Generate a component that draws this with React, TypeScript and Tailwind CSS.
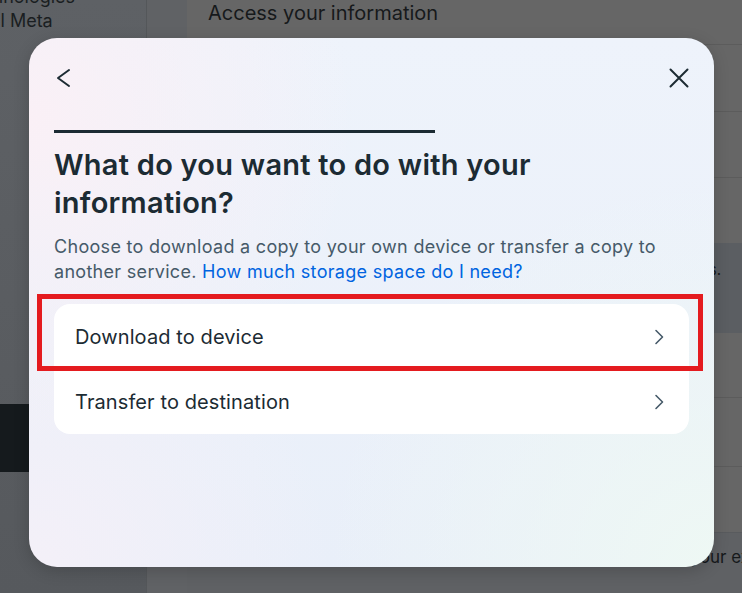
const options = ["Download to device", "Transfer to destination"];

function BackIcon() {
  return (
    <svg width="24" height="24" viewBox="0 0 24 24" fill="none" stroke="#1c2b33" strokeWidth="2" strokeLinecap="round" strokeLinejoin="round">
      <path d="M17 4 6 12l11 8" />
    </svg>
  );
}

function CloseIcon() {
  return (
    <svg width="24" height="24" viewBox="0 0 24 24" fill="none" stroke="#1c2b33" strokeWidth="2" strokeLinecap="round">
      <path d="M3.5 3.5 20.5 20.5M20.5 3.5 3.5 20.5" />
    </svg>
  );
}

function RowChevron() {
  return (
    <svg width="16" height="16" viewBox="0 0 16 16" fill="none" stroke="#465a69" strokeWidth="1.6" strokeLinecap="round" strokeLinejoin="round">
      <path d="M5 1.5 11.5 8 5 14.5" />
    </svg>
  );
}

export default function App() {
  return (
    <div className="relative h-[593px] w-[742px] overflow-hidden font-['Inter',sans-serif]">
      {/* page behind the dialog, already dimmed */}
      <div className="flex h-full">
        <aside className="flex w-[147px] shrink-0 flex-col overflow-hidden border-r border-[#54575a] bg-[linear-gradient(180deg,#5e6165,#56595d)] text-[18px] leading-[24px] text-[#1a1e21]">
          <div className="-mt-[15px]">
            <p className="-ml-[34px] whitespace-nowrap">technologies</p>
            <p className="-ml-[14px] whitespace-nowrap">all Meta</p>
          </div>
          <div className="mt-[371px] h-[68px] w-[128px] shrink-0 rounded-r-lg bg-[#151a1d]" />
        </aside>
        <div className="w-[40px] shrink-0 bg-[#606265]" />
        <main className="flex min-w-0 flex-1 flex-col overflow-hidden bg-[#666666] text-[#16191b]">
          <h1 className="pl-[21px] pt-[1px] text-[20px] leading-[24px]">Access your information</h1>
          <div className="mt-[19px] flex flex-col">
            <div className="h-[67px] border-t border-[#5c5c5c]" />
            <div className="h-[66px] border-t border-[#5c5c5c]" />
            <div className="h-[66px] border-t border-[#5c5c5c]" />
            <div className="flex h-[90px] items-start justify-end bg-[#5b5e62] pt-[16px] pr-[21px] text-[15px] leading-[22px]">
              <p className="whitespace-nowrap">photos and videos.</p>
            </div>
            <div className="h-[65px] border-b border-[#5c5c5c]" />
            <div className="h-[69px] border-b border-[#5c5c5c]" />
            <div className="h-[65px]" />
          </div>
          <div className="flex-1 border-t border-[#595b5e] bg-[#5f6164] pt-[12px] pl-[434px] text-[17px] whitespace-nowrap">
            Manage your experience
          </div>
        </main>
      </div>

      {/* dialog */}
      <div className="absolute left-[29px] top-[38px] flex h-[529px] w-[685px] flex-col rounded-[28px] bg-[radial-gradient(circle_at_0%_15%,#faf0f6_0%,transparent_40%),radial-gradient(circle_at_100%_100%,#eef8f4_0%,transparent_45%),radial-gradient(circle_at_0%_100%,#f4f0f8_0%,transparent_35%),linear-gradient(180deg,#eef3fb,#e9eff9)] px-[25px] shadow-[0_4px_16px_rgba(0,0,0,0.18)]">
        <div className="-mx-[2px] flex items-center justify-between pt-[28px]">
          <BackIcon />
          <CloseIcon />
        </div>
        <div className="mt-[40px] h-[3px] w-full">
          <div className="h-full w-[60%] bg-[#1c2b33]" />
        </div>
        <h2 className="mt-[13px] text-[29px] font-semibold leading-[38px] tracking-[0.25px] text-[#1c2b33]">
          What do you want to do with your information?
        </h2>
        <p className="mt-[12px] text-[18px] leading-[25px] tracking-[0.3px] text-[#465a69]">
          Choose to download a copy to your own device or transfer a copy to another service.{" "}
          <span className="text-[#0064e0]">How much storage space do I need?</span>
        </p>
        <div className="mt-[20px] overflow-hidden rounded-[16px] bg-white">
          {options.map((label) => (
            <div key={label} className="flex h-[65px] items-center justify-between pl-[21px] pr-[22px] text-[20px] tracking-[0.1px] text-[#1c2b33]">
              <span>{label}</span>
              <RowChevron />
            </div>
          ))}
        </div>
      </div>

      {/* red highlight drawn over the first option */}
      <div className="absolute left-[37px] top-[294px] h-[77px] w-[666px] border-[5px] border-[#e41b1f]" />
    </div>
  );
}
